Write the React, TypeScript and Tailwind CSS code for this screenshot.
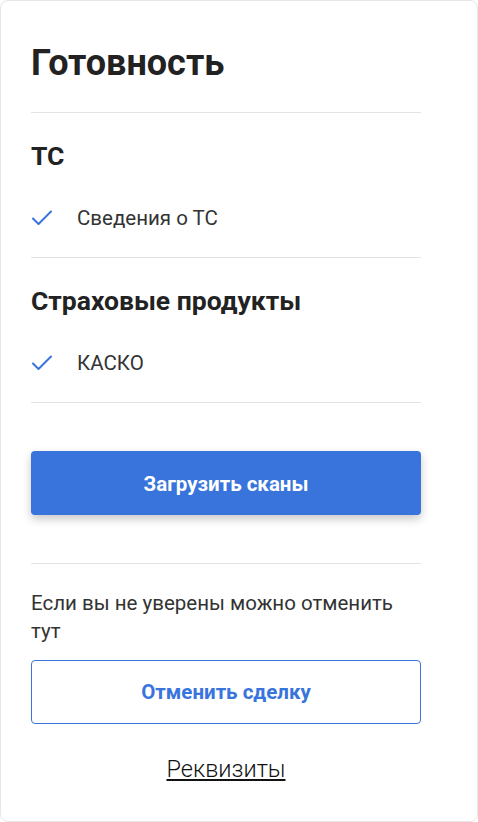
const CheckMark = () => (
  <svg width="20" height="16" viewBox="0 0 20 16" fill="none" className="shrink-0">
    <polyline points="1,8.5 6.5,14 19,1.5" stroke="#3874DB" strokeWidth="2" strokeLinecap="round" strokeLinejoin="round" />
  </svg>
)

const Divider: React.FC<{ className?: string }> = ({ className = "" }) => <div className={`h-px bg-[#e3e3e3] ${className}`} />

const Section: React.FC<{ title: string; item: string }> = ({ title, item }) => (
  <>
    <h2 className="mt-[27px] text-[26.5px] leading-[32px] font-bold text-[#222]">{title}</h2>
    <div className="mt-[22px] flex h-[48px] items-center">
      <div className="w-[46px] pl-px">
        <CheckMark />
      </div>
      <span className="text-[20.5px] leading-[28px] text-[#333]">{item}</span>
    </div>
    <Divider className="mt-[15px]" />
  </>
)

export default function App() {
  return (
    <div className="bg-white font-['Roboto',sans-serif]">
      <div className="w-[478px] rounded-lg border border-[#e6e6e6] pb-[37px] pl-[30px] pt-[42px]">
        <div className="w-[390px]">
          <h1 className="text-[36px] leading-[40px] font-bold text-[#222]">Готовность</h1>
          <Divider className="mt-[29px]" />

          <Section title="ТС" item="Сведения о ТС" />
          <Section title="Страховые продукты" item="КАСКО" />

          <button className="mt-[48px] flex h-[64px] w-full items-center justify-center rounded bg-[#3874DB] pt-[2px] text-[20.5px] font-bold text-white shadow-[0_4px_10px_rgba(0,0,0,0.22)]">
            Загрузить сканы
          </button>

          <Divider className="mt-[48px]" />

          <p className="mt-[25px] text-[20.5px] leading-[28px] text-[#333]">Если вы не уверены можно отменить тут</p>

          <button className="mt-[15px] flex h-[64px] w-full items-center justify-center rounded border border-[#3874DB] bg-white text-[20.5px] font-bold text-[#3874DB]">
            Отменить сделку
          </button>

          <div className="mt-[31px] text-center">
            <a href="#" className="text-[23.5px] leading-[28px] font-light text-[#111] underline">
              Реквизиты
            </a>
          </div>
        </div>
      </div>
    </div>
  )
}
